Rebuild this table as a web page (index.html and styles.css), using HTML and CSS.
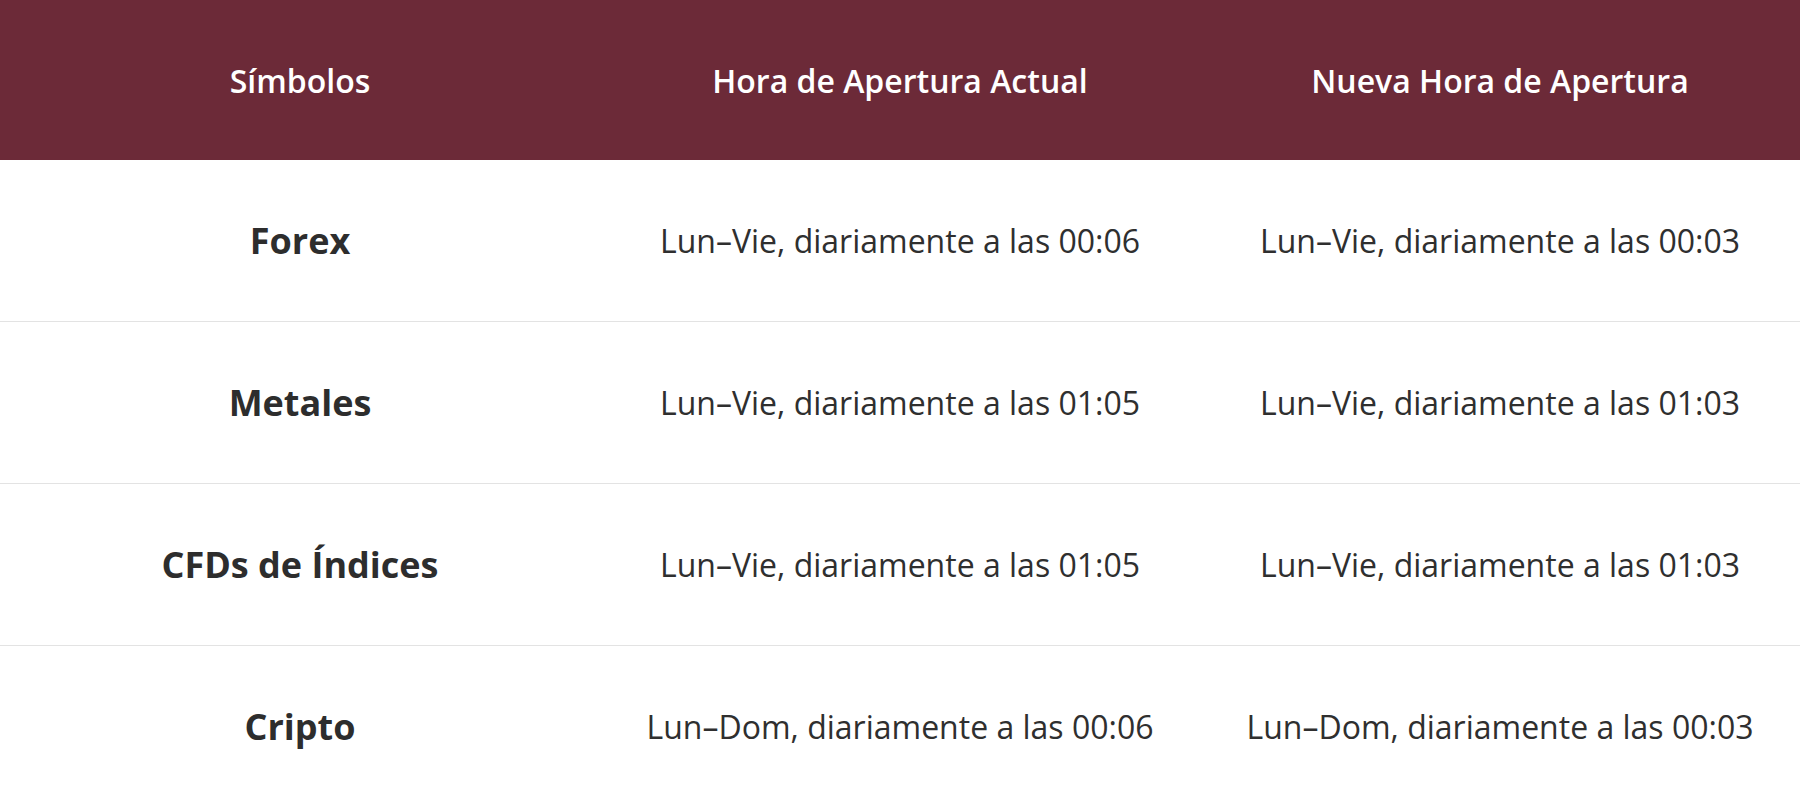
FILE: index.html
```html
<!DOCTYPE html>
<html lang="es">
<head>
<meta charset="utf-8">
<title>Horarios de apertura</title>
<link rel="stylesheet" href="styles.css">
</head>
<body>
<table class="hours">
  <thead>
    <tr>
      <th>Símbolos</th>
      <th>Hora de Apertura Actual</th>
      <th>Nueva Hora de Apertura</th>
    </tr>
  </thead>
  <tbody>
    <tr>
      <td class="sym">Forex</td>
      <td>Lun–Vie, diariamente a las 00:06</td>
      <td>Lun–Vie, diariamente a las 00:03</td>
    </tr>
    <tr>
      <td class="sym">Metales</td>
      <td>Lun–Vie, diariamente a las 01:05</td>
      <td>Lun–Vie, diariamente a las 01:03</td>
    </tr>
    <tr>
      <td class="sym">CFDs de Índices</td>
      <td>Lun–Vie, diariamente a las 01:05</td>
      <td>Lun–Vie, diariamente a las 01:03</td>
    </tr>
    <tr>
      <td class="sym">Cripto</td>
      <td>Lun–Dom, diariamente a las 00:06</td>
      <td>Lun–Dom, diariamente a las 00:03</td>
    </tr>
  </tbody>
</table>
</body>
</html>
```
FILE: styles.css
```css
html, body {
  margin: 0;
  padding: 0;
  background: #ffffff;
}

body {
  font-family: "Open Sans", "Noto Sans", "Liberation Sans", sans-serif;
  color: #2f2f2f;
}

.hours {
  width: 100%;
  border-collapse: collapse;
  table-layout: fixed;
}

.hours th {
  background: #6c2a38;
  color: #ffffff;
  font-weight: 600;
  font-size: 32px;
  height: 160px;
  padding: 0;
  text-align: center;
  vertical-align: middle;
}

.hours td {
  height: 161px;
  padding: 0;
  text-align: center;
  vertical-align: middle;
  font-size: 32px;
  font-weight: 400;
  border-top: 1px solid #e3e3e3;
}

.hours tbody tr:first-child td {
  border-top: none;
}

.hours td.sym {
  font-weight: 700;
  font-size: 36px;
  color: #2d2d2d;
}
```
